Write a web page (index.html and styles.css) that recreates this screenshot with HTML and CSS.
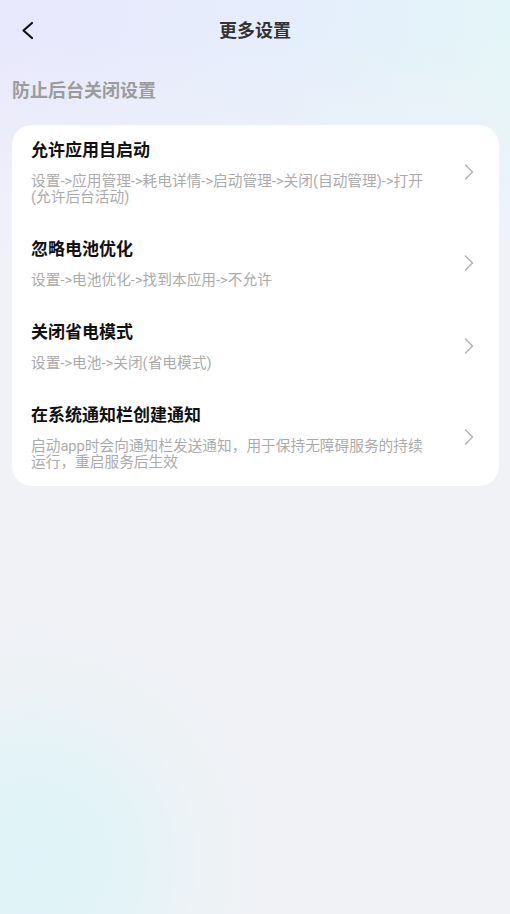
FILE: index.html
```html
<!DOCTYPE html>
<html lang="zh-CN">
<head>
<meta charset="utf-8">
<title>更多设置</title>
<link rel="stylesheet" href="styles.css">
</head>
<body>
<div class="page">
  <header class="topbar">
    <div class="back">
      <svg width="24" height="24" viewBox="0 0 24 24"><path d="M16 4 L7.5 11.5 L16 19" fill="none" stroke="#111" stroke-width="2.2" stroke-linecap="round" stroke-linejoin="round"/></svg>
    </div>
    <h1 class="title">更多设置</h1>
    <div></div>
  </header>
  <h2 class="section">防止后台关闭设置</h2>
  <div class="card">
    <div class="item">
      <div class="text">
        <div class="name">允许应用自启动</div>
        <div class="desc">设置-&gt;应用管理-&gt;耗电详情-&gt;启动管理-&gt;关闭(自动管理)-&gt;打开(允许后台活动)</div>
      </div>
      <svg class="chev" width="16" height="16" viewBox="0 0 16 16"><path d="M4.5 1 L11.5 8 L4.5 15" fill="none" stroke="#b3b3b3" stroke-width="1.5" stroke-linecap="round" stroke-linejoin="round"/></svg>
    </div>
    <div class="item">
      <div class="text">
        <div class="name">忽略电池优化</div>
        <div class="desc">设置-&gt;电池优化-&gt;找到本应用-&gt;不允许</div>
      </div>
      <svg class="chev" width="16" height="16" viewBox="0 0 16 16"><path d="M4.5 1 L11.5 8 L4.5 15" fill="none" stroke="#b3b3b3" stroke-width="1.5" stroke-linecap="round" stroke-linejoin="round"/></svg>
    </div>
    <div class="item">
      <div class="text">
        <div class="name">关闭省电模式</div>
        <div class="desc">设置-&gt;电池-&gt;关闭(省电模式)</div>
      </div>
      <svg class="chev" width="16" height="16" viewBox="0 0 16 16"><path d="M4.5 1 L11.5 8 L4.5 15" fill="none" stroke="#b3b3b3" stroke-width="1.5" stroke-linecap="round" stroke-linejoin="round"/></svg>
    </div>
    <div class="item">
      <div class="text">
        <div class="name">在系统通知栏创建通知</div>
        <div class="desc">启动app时会向通知栏发送通知，用于保持无障碍服务的持续运行，重启服务后生效</div>
      </div>
      <svg class="chev" width="16" height="16" viewBox="0 0 16 16"><path d="M4.5 1 L11.5 8 L4.5 15" fill="none" stroke="#b3b3b3" stroke-width="1.5" stroke-linecap="round" stroke-linejoin="round"/></svg>
    </div>
  </div>
</div>
</body>
</html>
```
FILE: styles.css
```css
* { box-sizing: border-box; }
html, body { margin: 0; padding: 0; }
body {
  width: 510px;
  height: 914px;
  overflow: hidden;
  font-family: Roboto, "Noto Sans CJK SC", sans-serif;
  background-color: #f1f2f6;
  background-image:
    radial-gradient(circle at 30px 860px, rgba(222, 243, 248, 1) 0px, rgba(226, 243, 247, 0.85) 110px, rgba(233, 243, 245, 0.55) 170px, rgba(238, 242, 246, 0.3) 230px, rgba(241, 242, 246, 0) 280px),
    linear-gradient(180deg, rgba(241,242,246,0) 0px, rgba(241,242,246,0) 40px, #f1f2f6 260px),
    linear-gradient(100deg, #e9e8fc 0%, #e5eefc 45%, #e3faf5 100%);
}
.page { display: flex; flex-direction: column; }
.topbar {
  height: 62px;
  display: grid;
  grid-template-columns: 1fr auto 1fr;
  align-items: center;
}
.back { padding-left: 16px; display: flex; align-items: center; height: 24px; }
.back svg { display: block; }
.title {
  margin: 0;
  font-size: 18px;
  line-height: 24px;
  font-weight: 700;
  color: #333;
}
.section {
  margin: 17px 0 22px 12px;
  font-size: 18px;
  line-height: 24px;
  font-weight: 700;
  color: #9c9c9c;
}
.card {
  margin: 0 11px 0 12px;
  background: #fff;
  border-radius: 20px;
}
.item {
  display: flex;
  align-items: center;
  padding: 17px 22px 16px 19px;
}
.item:first-child { padding-top: 14px; }
.text { flex: 1; min-width: 0; padding-right: 7px; }
.name {
  font-size: 17px;
  line-height: 22px;
  font-weight: 700;
  color: #111;
}
.desc {
  margin-top: 12px;
  font-size: 14.7px;
  line-height: 16px;
  color: #ababab;
}
.chev { flex: none; margin-left: 23px; display: block; }
```
